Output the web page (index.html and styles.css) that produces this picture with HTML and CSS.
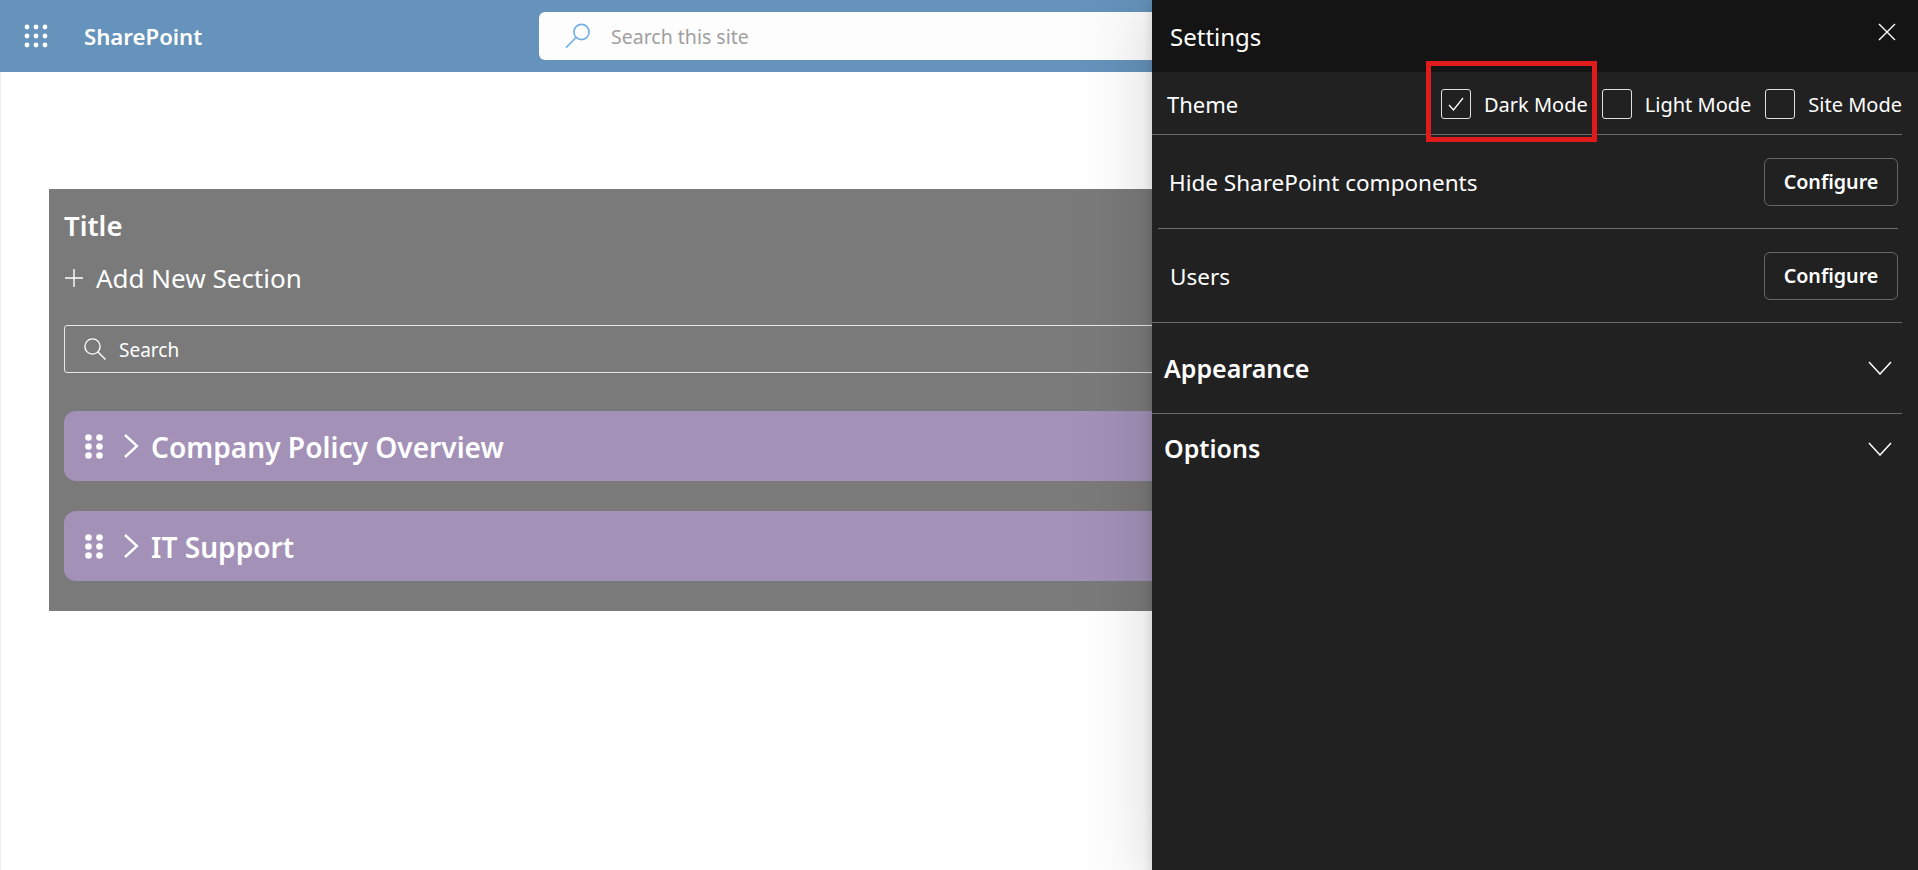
FILE: index.html
```html
<!DOCTYPE html>
<html lang="en">
<head>
  <meta charset="UTF-8" />
  <title>SharePoint - Settings</title>
  <link rel="stylesheet" href="styles.css">
</head>
<body>
  <header class="topbar">
    <svg class="waffle" width="24" height="24" viewBox="0 0 24 24" fill="#fff">
      <circle cx="3" cy="3" r="2.4"/><circle cx="12" cy="3" r="2.4"/><circle cx="21" cy="3" r="2.4"/>
      <circle cx="3" cy="12" r="2.4"/><circle cx="12" cy="12" r="2.4"/><circle cx="21" cy="12" r="2.4"/>
      <circle cx="3" cy="21" r="2.4"/><circle cx="12" cy="21" r="2.4"/><circle cx="21" cy="21" r="2.4"/>
    </svg>
    <div class="brand">SharePoint</div>
    <div class="site-search">
      <svg width="26" height="26" viewBox="0 0 26 26" fill="none" stroke="#71afe5" stroke-width="1.6">
        <circle cx="16.5" cy="9" r="7.6"/>
        <path d="M11 14.5 1 24.6"/>
      </svg>
      <span>Search this site</span>
    </div>
  </header>

  <main class="page">
    <section class="board">
      <h2 class="board-title">Title</h2>
      <div class="add-new">
        <svg width="18" height="18" viewBox="0 0 18 18" stroke="#fff" stroke-width="1.4"><path d="M9 0v18M0 9h18"/></svg>
        <span>Add New Section</span>
      </div>
      <div class="board-search">
        <svg width="22" height="22" viewBox="0 0 22 22" fill="none" stroke="#fff" stroke-width="1.4">
          <circle cx="8.5" cy="8.5" r="7.6"/>
          <path d="M14 14l7.5 7.5"/>
        </svg>
        <span>Search</span>
      </div>
      <div class="row">
        <svg class="grip" width="18" height="25" viewBox="0 0 18 25" fill="#fff">
          <circle cx="3.5" cy="3.5" r="3.3"/><circle cx="14.5" cy="3.5" r="3.3"/>
          <circle cx="3.5" cy="12.5" r="3.3"/><circle cx="14.5" cy="12.5" r="3.3"/>
          <circle cx="3.5" cy="21.5" r="3.3"/><circle cx="14.5" cy="21.5" r="3.3"/>
        </svg>
        <svg class="chev" width="16" height="24" viewBox="0 0 16 24" fill="none" stroke="#fff" stroke-width="2.4"><path d="M2 1l12 11L2 23"/></svg>
        <span>Company Policy Overview</span>
      </div>
      <div class="row">
        <svg class="grip" width="18" height="25" viewBox="0 0 18 25" fill="#fff">
          <circle cx="3.5" cy="3.5" r="3.3"/><circle cx="14.5" cy="3.5" r="3.3"/>
          <circle cx="3.5" cy="12.5" r="3.3"/><circle cx="14.5" cy="12.5" r="3.3"/>
          <circle cx="3.5" cy="21.5" r="3.3"/><circle cx="14.5" cy="21.5" r="3.3"/>
        </svg>
        <svg class="chev" width="16" height="24" viewBox="0 0 16 24" fill="none" stroke="#fff" stroke-width="2.4"><path d="M2 1l12 11L2 23"/></svg>
        <span>IT Support</span>
      </div>
    </section>
  </main>

  <aside class="panel">
    <div class="panel-head">
      <span class="panel-title">Settings</span>
      <svg class="close" width="18" height="18" viewBox="0 0 18 18" stroke="#fff" stroke-width="1.4"><path d="M1 1l16 16M17 1L1 17"/></svg>
    </div>

    <div class="theme-row">
      <span class="theme-label">Theme</span>
      <div class="theme-options">
        <label class="option">
          <span class="box">
            <svg width="16" height="16" viewBox="0 0 16 16" fill="none" stroke="#fff" stroke-width="1.3"><path d="M1 9l4.5 5L15 2"/></svg>
          </span>
          Dark Mode
        </label>
        <label class="option"><span class="box"></span>Light Mode</label>
        <label class="option"><span class="box"></span>Site Mode</label>
      </div>
    </div>

    <div class="config-row config-first">
      <span>Hide SharePoint components</span>
      <button class="config-btn">Configure</button>
    </div>
    <div class="config-row config-users">
      <span>Users</span>
      <button class="config-btn">Configure</button>
    </div>

    <div class="accordion accordion-first">
      <span>Appearance</span>
      <svg width="24" height="14" viewBox="0 0 24 14" fill="none" stroke="#fff" stroke-width="1.5"><path d="M1 1l11 12L23 1"/></svg>
    </div>
    <div class="accordion accordion-last">
      <span class="accordion-text">Options</span>
      <svg width="24" height="14" viewBox="0 0 24 14" fill="none" stroke="#fff" stroke-width="1.5"><path d="M1 1l11 12L23 1"/></svg>
    </div>

    <div class="highlight"></div>
  </aside>
</body>
</html>
```

FILE: styles.css
```css
* {
  box-sizing: border-box;
}
html, body {
  height: 100%;
}
body {
  margin: 0;
  font-family: "Noto Sans", "Open Sans", sans-serif;
  background-color: #fff;
  overflow: hidden;
}

/* top bar */
.topbar {
  height: 72px;
  background-color: #6593bb;
  display: flex;
  align-items: center;
  padding-left: 24px;
  color: #fff;
}
.brand {
  margin-left: 36px;
  font-size: 22.2px;
  font-weight: 600;
  flex: 0 0 455px;
}
.site-search {
  flex: 0 0 800px;
  height: 48px;
  background-color: #fdfdfd;
  border-radius: 6px;
  display: flex;
  align-items: center;
  padding-left: 26px;
  gap: 20px;
  color: #a19f9d;
  font-size: 19.5px;
}

/* page content */
.page {
  height: calc(100% - 72px);
  padding: 117px 49px 0;
  border-left: 1px solid #eee;
}
.board {
  margin-left: -1px;
  height: 422px;
  background-color: #7a7a7a;
  padding: 18px 15px 0;
  color: #fff;
}
.board-title {
  margin: 0;
  font-size: 27.5px;
  font-weight: 600;
  line-height: 38px;
}
.add-new {
  margin-top: 14px;
  height: 38px;
  display: flex;
  align-items: center;
  gap: 13px;
  font-size: 26px;
  padding-left: 1px;
}
.board-search {
  margin-top: 28px;
  height: 48px;
  border: 1px solid #e6e6e6;
  border-radius: 3px;
  display: flex;
  align-items: center;
  padding-left: 19px;
  gap: 13px;
  font-size: 19px;
}
.board-search span {
  padding-top: 2px;
}
.row {
  margin-top: 38px;
  height: 70px;
  background-color: #a391b8;
  border-radius: 12px;
  display: flex;
  align-items: center;
  padding-left: 21px;
  font-size: 28.1px;
  font-weight: 600;
}
.row + .row {
  margin-top: 30px;
}
.row span {
  padding-top: 2px;
}
.row .chev {
  margin-left: 20px;
  margin-right: 12px;
}

/* settings panel */
.panel {
  position: absolute;
  top: 0;
  right: 0;
  bottom: -20px;
  width: 766px;
  background-color: #212121;
  box-shadow: 0 0 70px rgba(0, 0, 0, 0.17), 0 0 10px rgba(0, 0, 0, 0.14);
  color: #fff;
  font-size: 22.5px;
}
.panel-head {
  height: 72px;
  background-color: #141414;
  display: flex;
  justify-content: space-between;
  padding: 23px 22px 0 18px;
}
.panel-title {
  font-size: 24px;
  line-height: 28px;
}
.theme-row {
  height: 63px;
  margin-right: 16px;
  padding-left: 15px;
  border-bottom: 1px solid #6a6a6a;
  display: flex;
  justify-content: space-between;
  align-items: center;
}
.theme-label {
  font-size: 22px;
  padding-top: 1px;
}
.theme-options {
  display: flex;
  gap: 14px;
}
.option {
  display: flex;
  align-items: center;
  gap: 13px;
  font-size: 20px;
  padding-top: 2px;
  white-space: nowrap;
}
.box {
  width: 30px;
  height: 30px;
  border: 1px solid #e0e0e0;
  border-radius: 3px;
  display: flex;
  align-items: center;
  justify-content: center;
}
.config-row {
  height: 94px;
  display: flex;
  justify-content: space-between;
  align-items: center;
  border-bottom: 1px solid #6a6a6a;
}
.config-row span {
  padding-top: 2px;
}
.config-first {
  margin: 0 20px 0 6px;
  padding-left: 11px;
}
.config-users {
  margin-right: 16px;
  padding: 0 4px 0 18px;
}
.config-btn {
  width: 134px;
  height: 48px;
  background-color: transparent;
  border: 1px solid #666;
  border-radius: 6px;
  color: #fff;
  font-family: inherit;
  font-size: 19.7px;
  font-weight: 600;
}
.accordion {
  height: 91px;
  display: flex;
  justify-content: space-between;
  align-items: center;
  margin-right: 16px;
  padding: 0 10px 0 12px;
  font-size: 25px;
  font-weight: 600;
}
.accordion-first {
  border-bottom: 1px solid #6a6a6a;
}
.accordion-last {
  height: 70px;
}
.accordion-text {
  padding-bottom: 2px;
}
.highlight {
  position: absolute;
  left: 274px;
  top: 61px;
  width: 171px;
  height: 81px;
  border: 5px solid #e01b1b;
}
```
